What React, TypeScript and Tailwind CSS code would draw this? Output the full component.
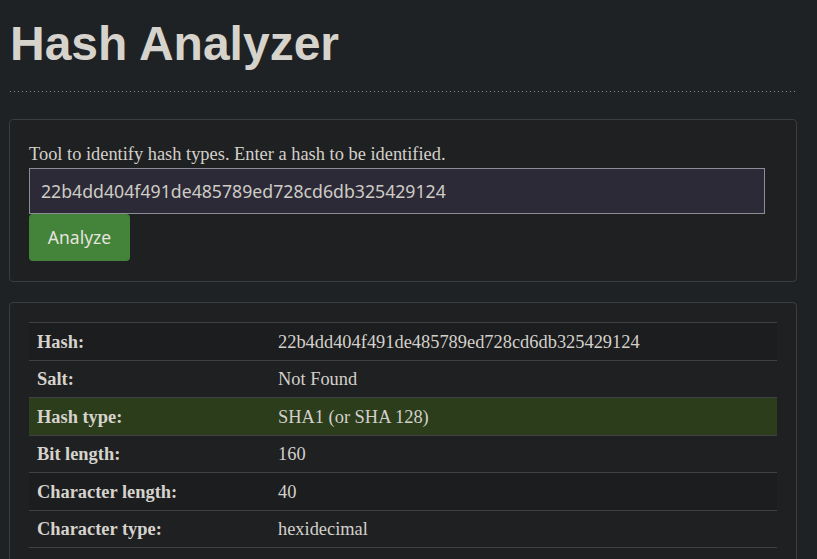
import React from "react";

const rows: { label: string; value: string; highlight?: boolean }[] = [
  { label: "Hash:", value: "22b4dd404f491de485789ed728cd6db325429124" },
  { label: "Salt:", value: "Not Found" },
  { label: "Hash type:", value: "SHA1 (or SHA 128)", highlight: true },
  { label: "Bit length:", value: "160" },
  { label: "Character length:", value: "40" },
  { label: "Character type:", value: "hexidecimal" },
];

export default function App() {
  return (
    <div className="h-[559px] w-full overflow-hidden bg-[#1f2224] px-[9px] pt-[14px] pb-6 text-[#d3d0ca]">
      <h1 className="pl-[1px] font-['Liberation_Sans',Arial,sans-serif] text-[48px] font-bold leading-[60px] text-[#d6d3cd]">
        Hash Analyzer
      </h1>
      <div className="mt-[17px] mr-[11px] ml-[1px] h-px bg-[repeating-linear-gradient(to_right,#85888a_0px,#85888a_1px,transparent_1px,transparent_4px)]" />
      <div className="mt-[27px] mr-[11px] rounded-[4px] border border-[#3a3d3f] bg-[#1f2022] px-[19px] pt-[20px] pb-[20px]">
        <p className="font-['Liberation_Serif','Times_New_Roman',serif] text-[18.4px] leading-[28px] text-[#d3d0ca]">
          Tool to identify hash types. Enter a hash to be identified.
        </p>
        <div className="flex h-[46px] w-[736px] items-center border border-[#8e8d97] bg-[#2b2a36] px-[11px] font-['Noto_Sans',sans-serif] text-[17.7px] text-[#cfccc6]">
          22b4dd404f491de485789ed728cd6db325429124
        </div>
        <button className="flex h-[47px] w-[101px] items-center justify-center rounded-[4px] bg-[#43833a] font-['Noto_Sans',sans-serif] text-[17.5px] text-[#e6e4df]">
          Analyze
        </button>
      </div>
      <div className="mt-[20px] mr-[11px] rounded-[4px] border border-[#3a3d3f] bg-[#1f2022] px-[19px] pt-[19px] pb-[20px]">
        <div className="border-t border-[#3f4244] font-['Liberation_Serif','Times_New_Roman',serif] text-[18.4px]">
          {rows.map((r, i) => (
            <div
              key={r.label}
              className={
                "flex h-[37.5px] items-center border-b border-[#3f4244] pt-[3px] " +
                (r.highlight ? "bg-[#2c3d1c]" : i % 2 === 0 ? "bg-[#1b1d1f]" : "bg-[#1f2022]")
              }
            >
              <div className="w-[241px] pl-[8px] font-bold text-[#d6d3cd]">{r.label}</div>
              <div className="pl-[8px] text-[#d3d0ca]">{r.value}</div>
            </div>
          ))}
        </div>
      </div>
    </div>
  );
}
